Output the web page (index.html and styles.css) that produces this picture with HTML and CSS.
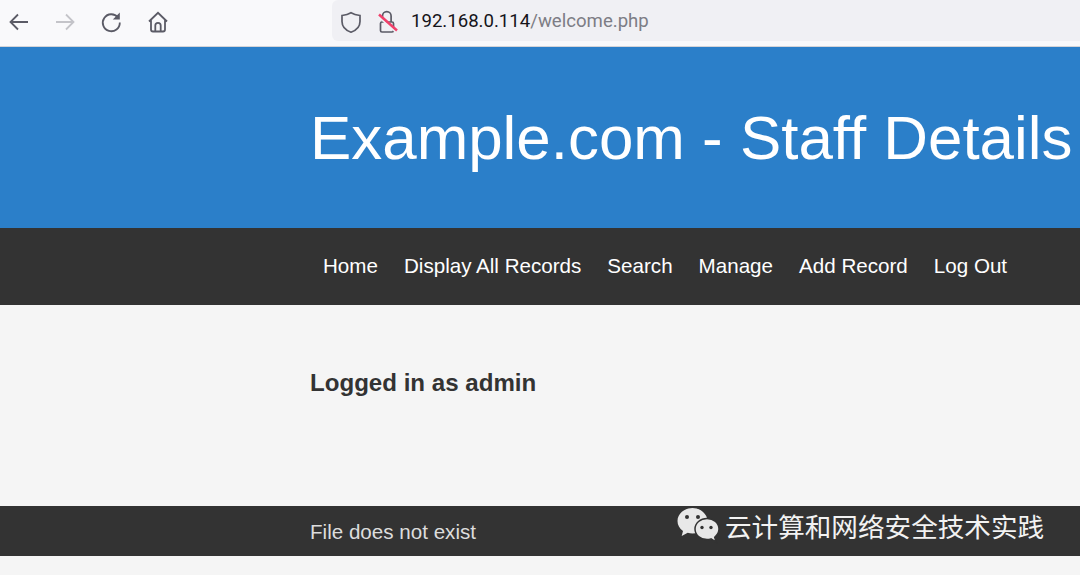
FILE: index.html
```html
<!DOCTYPE html>
<html lang="en">
<head>
  <meta charset="UTF-8">
  <title>Example.com - Staff Details</title>
  <link rel="stylesheet" href="styles.css">
</head>
<body>

  <div class="browser-bar">
    <div class="nav-btns">
      <svg class="icon" viewBox="0 0 24 24"><path d="M20 12H2.500M10 4.500L2.500 12l7.500 7.500"/></svg>
      <svg class="icon icon-off" viewBox="0 0 24 24"><path d="M2 12h17.500M12 4.500l7.500 7.500-7.500 7.500"/></svg>
      <svg class="icon" viewBox="0 0 24 24">
        <path d="M18 7.500A8.500 8.500 0 1 0 19.800 12.500"/>
        <path class="icon-fill" d="M19.800 2.500v7h-7z"/>
      </svg>
      <svg class="icon" viewBox="0 0 24 24"><path d="M3 11.500L12 2.800l9 8.700M5 9.500v10a2 2 0 0 0 2 2h10a2 2 0 0 0 2-2v-10M9.300 21.500v-6a2.700 2.700 0 0 1 5.400 0v6"/></svg>
    </div>
    <div class="url-bar">
      <svg class="shield" viewBox="0 0 24 24"><path d="M12 2.800c2.500 1.500 5.500 2.300 9 2.700v6c0 5-3.500 8.800-9 10.700-5.500-1.900-9-5.700-9-10.700v-6c3.500-.4 6.500-1.200 9-2.700z"/></svg>
      <svg class="lock" viewBox="0 0 24 24">
        <path d="M6.500 12V6a4.300 4.300 0 0 1 8.600 0v6M6 12h10a1.500 1.500 0 0 1 1.500 1.500v7a1.500 1.500 0 0 1-1.500 1.500H6a1.500 1.500 0 0 1-1.500-1.500v-7A1.500 1.500 0 0 1 6 12z"/>
        <path class="slash-gap" d="M4 8l17 15"/>
        <path class="slash" d="M3 4.500l18 16"/>
      </svg>
      <span class="url"><span class="host">192.168.0.114</span>/welcome.php</span>
    </div>
  </div>

  <header class="site-header">
    <h1>Example.com - Staff Details</h1>
  </header>

  <nav class="site-nav">
    <a href="#">Home</a>
    <a href="#">Display All Records</a>
    <a href="#">Search</a>
    <a href="#">Manage</a>
    <a href="#">Add Record</a>
    <a href="#">Log Out</a>
  </nav>

  <main class="content">
    <h3>Logged in as admin</h3>
  </main>

  <footer class="site-footer">File does not exist</footer>

  <div class="watermark">
    <svg class="wechat" viewBox="0 0 43 37">
      <path class="bubble" d="M15.500 1C7.300 1 .5 6.700.5 14c0 4 2 7.500 5.500 10L4.700 29l6-3.200c1.500.4 3 .7 4.800.7 8.200 0 15-5.700 15-12.500S23.700 1 15.500 1z"/>
      <path class="bubble bubble-front" d="M42 22c0-6-5.400-10.500-12-10.500S18 16 18 22s5.400 10.500 12 10.500c1.400 0 2.800-.2 4-.6l5 2.900-1.300-4.600C40.300 28 42 25.200 42 22z"/>
      <circle class="eye" cx="10" cy="10" r="2"/>
      <circle class="eye" cx="21" cy="10" r="2"/>
      <circle class="eye" cx="25" cy="20.500" r="1.700"/>
      <circle class="eye" cx="34" cy="20.500" r="1.700"/>
    </svg>
    <span>云计算和网络安全技术实践</span>
  </div>

</body>
</html>
```

FILE: styles.css
```css
html, body {
  height: 100%;
}

body {
  font-family: "Liberation Sans", Arial, sans-serif;
  background: #f5f5f5;
  margin: 0;
  overflow: hidden;
  position: relative;
}

.browser-bar {
  display: flex;
  height: 46px;
  background: #f9f9fb;
  border-bottom: 1px solid #d4d4d8;
}

.nav-btns {
  display: flex;
  align-items: center;
  gap: 22px;
  width: 332px;
  padding: 0 0 3px 8px;
  box-sizing: border-box;
}

.icon {
  width: 24px;
  height: 24px;
  fill: none;
  stroke: #5b5b66;
  stroke-width: 1.800;
}

.icon .icon-fill {
  fill: #5b5b66;
  stroke: none;
}

.icon-off {
  stroke: #c4c4c9;
}

.url-bar {
  display: flex;
  align-items: center;
  width: 748px;
  height: 41px;
  background: #f0f0f4;
  border-radius: 6px 0 0 6px;
  padding: 2px 0 0 7px;
  box-sizing: border-box;
}

.shield, .lock {
  width: 24px;
  height: 24px;
  fill: none;
  stroke: #5b5b66;
  stroke-width: 1.700;
}

.lock {
  margin-left: 13px;
}

.lock .slash-gap {
  stroke: #f0f0f4;
  stroke-width: 2;
}

.lock .slash {
  stroke: #f0406a;
  stroke-width: 2.500;
}

.url {
  font-family: Roboto, "Noto Sans", sans-serif;
  font-size: 18.600px;
  color: #7d7d85;
  margin: 0 0 2px 11px;
}

.host {
  color: #15141a;
}

.site-header {
  background: #2b7fc9;
  height: 181px;
  padding: 0 0 1px 310px;
  box-sizing: border-box;
  display: flex;
  align-items: center;
}

.site-header h1 {
  margin: 0;
  font-size: 61.900px;
  font-weight: normal;
  font-variant-ligatures: none;
  color: #fff;
  white-space: nowrap;
}

.site-nav {
  background: #333;
  height: 77px;
  padding: 0 0 2px 323px;
  box-sizing: border-box;
  display: flex;
  align-items: center;
  gap: 26px;
}

.site-nav a {
  color: #fff;
  font-size: 20.600px;
  text-decoration: none;
}

.content {
  height: 201px;
  padding-left: 310px;
  box-sizing: border-box;
}

.content h3 {
  margin: 0;
  padding-top: 64px;
  font-size: 24.100px;
  color: #333;
}

.site-footer {
  background: #333;
  height: 50px;
  line-height: 52px;
  padding-left: 310px;
  color: #ddd;
  font-size: 20.600px;
}

.watermark {
  position: absolute;
  left: 677px;
  top: 506px;
  display: flex;
  align-items: center;
  gap: 5px;
  color: #f2f2f2;
  font-family: "Noto Sans CJK SC", sans-serif;
  font-size: 26.600px;
}

.wechat {
  width: 43px;
  height: 37px;
}

.bubble {
  fill: #e8e8e8;
}

.bubble-front {
  stroke: #333;
  stroke-width: 1.500;
}

.eye {
  fill: #333;
}
```
